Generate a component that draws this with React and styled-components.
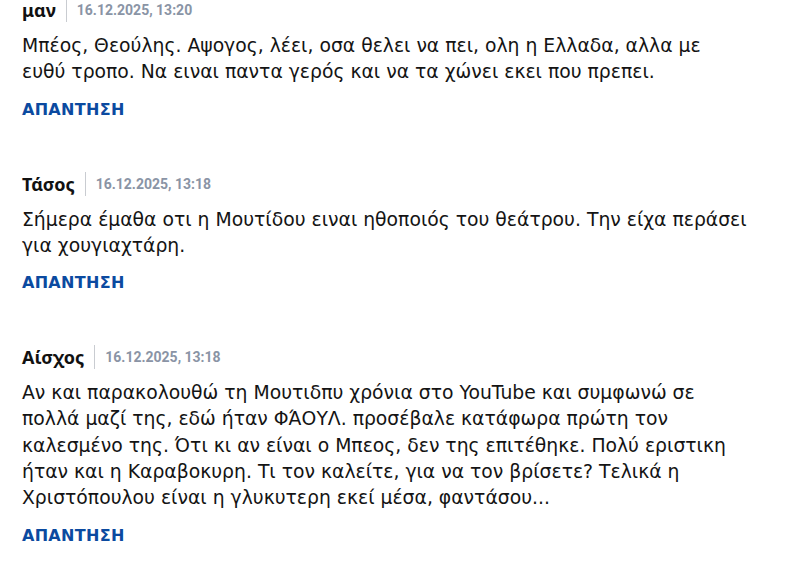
import React from "react";
import styled, {createGlobalStyle} from "styled-components";

const GlobalStyle = createGlobalStyle`
  html, body {
    margin: 0;
    padding: 0;
    background: #ffffff;
    overflow: hidden;
  }
  body {
    font-family: "DejaVu Sans", "Noto Sans", sans-serif;
    color: #111111;
  }
`

const List = styled.div`
  display: flex;
  flex-direction: column;
  gap: 48px;
  padding: 0 22px;
  margin-top: -3px;
`

const Comment = styled.article`
  display: flex;
  flex-direction: column;
`

const Meta = styled.div`
  display: flex;
  align-items: center;
  height: 26px;
`

const Author = styled.span`
  font-family: "Noto Sans", "Liberation Sans", sans-serif;
  font-weight: 700;
  font-size: 18px;
  color: #111111;
`

const Divider = styled.span`
  width: 1px;
  height: 24px;
  background: #c9ccd1;
  margin: 0 10px;
`

const Date = styled.span`
  font-family: "Roboto", "Liberation Sans", sans-serif;
  font-weight: 700;
  font-size: 14px;
  color: #8a94a5;
`

const Body = styled.p`
  margin: 10px 0 0;
  font-size: 18.8px;
  line-height: 26.3px;
  color: #141414;
`

const Reply = styled.a`
  margin-top: 11px;
  align-self: flex-start;
  font-family: "DejaVu Sans", "Liberation Sans", sans-serif;
  font-weight: 700;
  font-size: 16px;
  letter-spacing: 0.3px;
  line-height: 26px;
  color: #0b4aa0;
  text-decoration: none;
  cursor: pointer;
`

const comments = [
    {
        author: "μαν",
        date: "16.12.2025, 13:20",
        lines: [
            "Μπέος, Θεούλης. Αψογος, λέει, οσα θελει να πει, ολη η Ελλαδα, αλλα με",
            "ευθύ τροπο. Να ειναι παντα γερός και να τα χώνει εκει που πρεπει.",
        ],
    },
    {
        author: "Τάσος",
        date: "16.12.2025, 13:18",
        lines: [
            "Σήμερα έμαθα οτι η Μουτίδου ειναι ηθοποιός του θεάτρου. Την είχα περάσει",
            "για χουγιαχτάρη.",
        ],
    },
    {
        author: "Αίσχος",
        date: "16.12.2025, 13:18",
        lines: [
            "Αν και παρακολουθώ τη Μουτιδπυ χρόνια στο YouTube και συμφωνώ σε",
            "πολλά μαζί της, εδώ ήταν ΦΆΟΥΛ. προσέβαλε κατάφωρα πρώτη τον",
            "καλεσμένο της. Ότι κι αν είναι ο Μπεος, δεν της επιτέθηκε. Πολύ εριστικη",
            "ήταν και η Καραβοκυρη. Τι τον καλείτε, για να τον βρίσετε? Τελικά η",
            "Χριστόπουλου είναι η γλυκυτερη εκεί μέσα, φαντάσου...",
        ],
    },
]

export default function App() {
    return (
        <>
            <GlobalStyle/>
            <List>
                {comments.map((c, i) => (
                    <Comment key={i}>
                        <Meta>
                            <Author>{c.author}</Author>
                            <Divider/>
                            <Date>{c.date}</Date>
                        </Meta>
                        <Body>
                            {c.lines.map((line, j) => (
                                <React.Fragment key={j}>
                                    {line}
                                    {j < c.lines.length - 1 && <br/>}
                                </React.Fragment>
                            ))}
                        </Body>
                        <Reply>ΑΠΑΝΤΗΣΗ</Reply>
                    </Comment>
                ))}
            </List>
        </>
    );
}
